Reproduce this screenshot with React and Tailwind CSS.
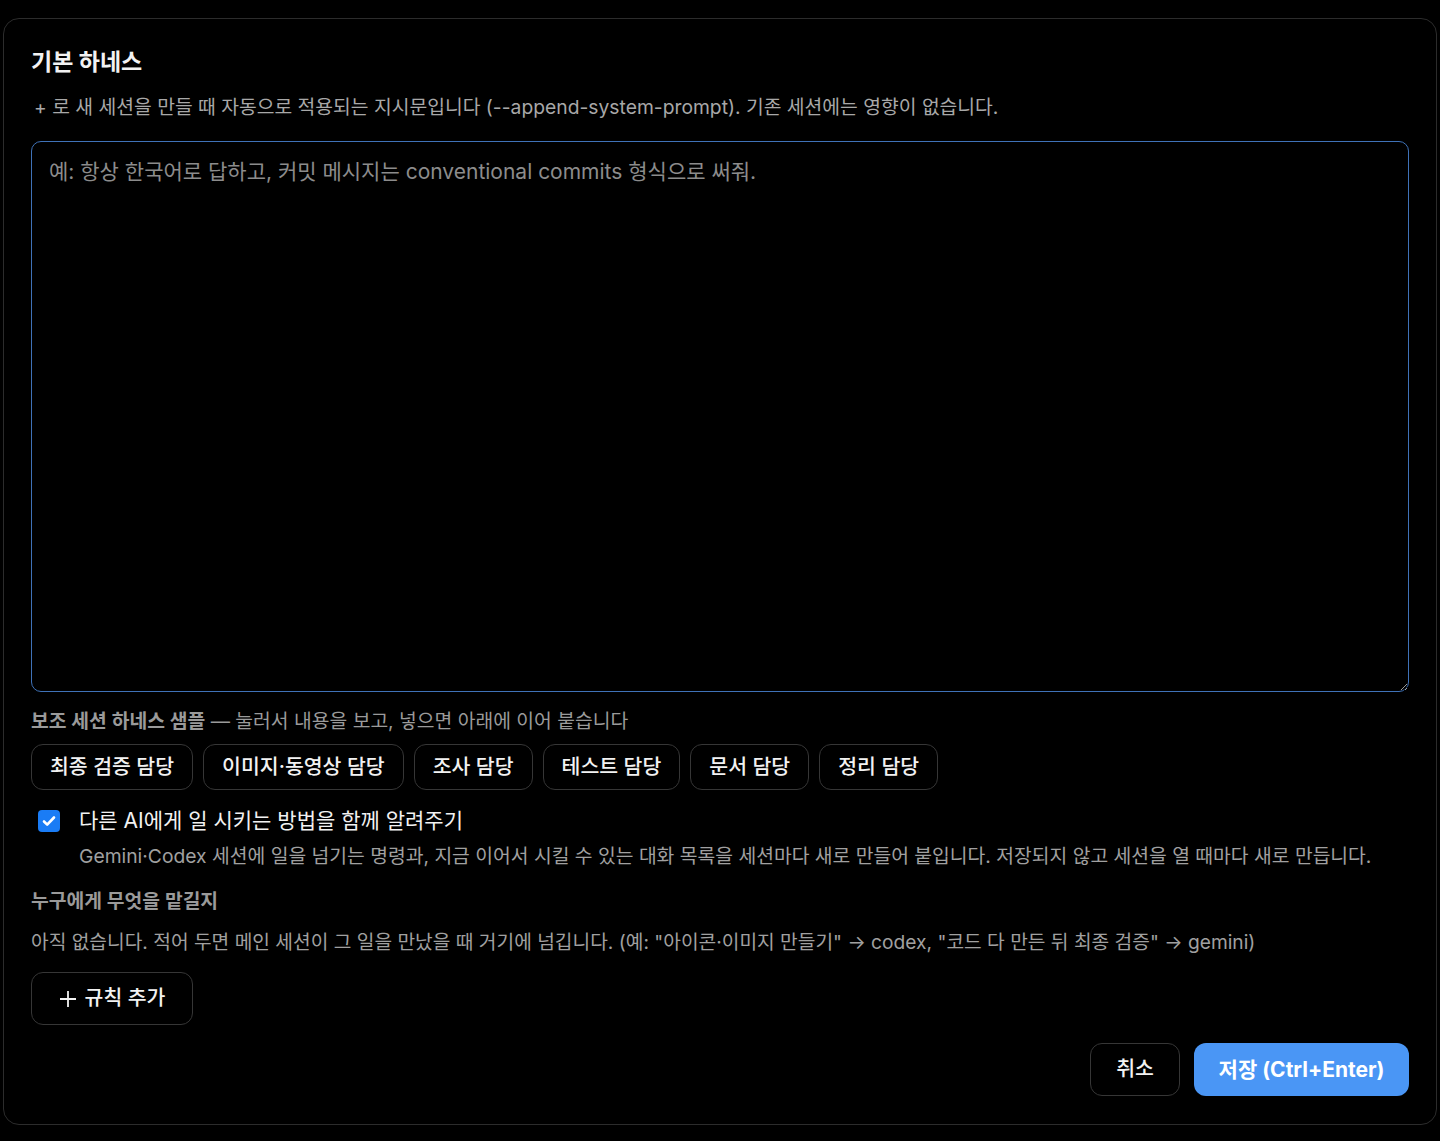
import React from "react";

const samples = ["최종 검증 담당", "이미지·동영상 담당", "조사 담당", "테스트 담당", "문서 담당", "정리 담당"];

const App = () => {
  return (
    <div className="min-h-[1141px] bg-black pt-[18px] pb-[18px] px-[3px] font-['Inter','Noto_Sans_CJK_KR',sans-serif]">
      <div className="border border-[#2c2c2c] rounded-2xl bg-black px-[27px] pt-7 pb-7">
        <h2 className="text-[23px] leading-[30px] font-bold text-[#f2f2f2]">기본 하네스</h2>
        <p className="mt-4 text-[19.3px] leading-[28px] text-[#a8a8a8] pl-[3px]">
          + 로 새 세션을 만들 때 자동으로 적용되는 지시문입니다 (--append-system-prompt). 기존 세션에는 영향이 없습니다.
        </p>

        <textarea
          className="mt-5 block w-full h-[551px] rounded-[10px] border border-[#3f72b8] bg-black px-[17px] py-[15px] text-[21px] leading-[30px] text-[#eeeeee] placeholder:text-[#8c8c8c] outline-none [color-scheme:dark]"
          placeholder="예: 항상 한국어로 답하고, 커밋 메시지는 conventional commits 형식으로 써줘."
        />

        <p className="mt-4 text-[19.3px] leading-[26px] text-[#9a9a9a]">
          <span className="font-semibold">보조 세션 하네스 샘플</span> — 눌러서 내용을 보고, 넣으면 아래에 이어 붙습니다
        </p>

        <div className="mt-2.5 flex gap-2.5">
          {samples.map((s) => (
            <button
              key={s}
              className="h-[46px] px-[18px] rounded-xl border border-[#363636] bg-black text-[20.5px] font-medium text-[#f2f2f2]"
            >
              {s}
            </button>
          ))}
        </div>

        <label className="mt-4 flex items-center gap-[19px] pl-[7px]">
          <span className="w-[22px] h-[22px] rounded-[4px] bg-[#1a7cf5] flex items-center justify-center">
            <svg width="16" height="16" viewBox="0 0 16 16" fill="none">
              <path d="M3 8.5l3.2 3.2L13 4.5" stroke="white" strokeWidth="2.6" strokeLinecap="round" strokeLinejoin="round" />
            </svg>
          </span>
          <span className="text-[21px] leading-[30px] text-[#f2f2f2]">다른 AI에게 일 시키는 방법을 함께 알려주기</span>
        </label>
        <p className="mt-1.5 pl-12 text-[19.3px] leading-[28px] text-[#a0a0a0]">
          Gemini·Codex 세션에 일을 넘기는 명령과, 지금 이어서 시킬 수 있는 대화 목록을 세션마다 새로 만들어 붙입니다. 저장되지 않고 세션을 열 때마다 새로 만듭니다.
        </p>

        <p className="mt-[18px] text-[19.3px] leading-[26px] font-semibold text-[#9a9a9a]">누구에게 무엇을 맡길지</p>
        <p className="mt-3.5 text-[19.2px] leading-[28px] text-[#a0a0a0]">
          아직 없습니다. 적어 두면 메인 세션이 그 일을 만났을 때 거기에 넘깁니다. (예: "아이콘·이미지 만들기" → codex, "코드 다 만든 뒤 최종 검증" → gemini)
        </p>

        <button className="mt-4 h-[53px] w-[162px] rounded-xl border border-[#363636] bg-black text-[20.5px] font-medium text-[#f2f2f2] flex items-center justify-center gap-2">
          <svg width="18" height="18" viewBox="0 0 18 18" fill="none">
            <path d="M9 1v16M1 9h16" stroke="#f2f2f2" strokeWidth="1.8" />
          </svg>
          <span>규칙 추가</span>
        </button>

        <div className="mt-[18px] flex justify-end gap-3.5">
          <button className="h-[53px] w-[90px] rounded-xl border border-[#363636] bg-black text-[20.5px] font-medium text-[#f2f2f2]">
            취소
          </button>
          <button className="h-[53px] w-[215px] rounded-xl bg-[#4a96f5] text-[21px] font-bold text-white">
            저장 (Ctrl+Enter)
          </button>
        </div>
      </div>
    </div>
  );
};

export default App;
